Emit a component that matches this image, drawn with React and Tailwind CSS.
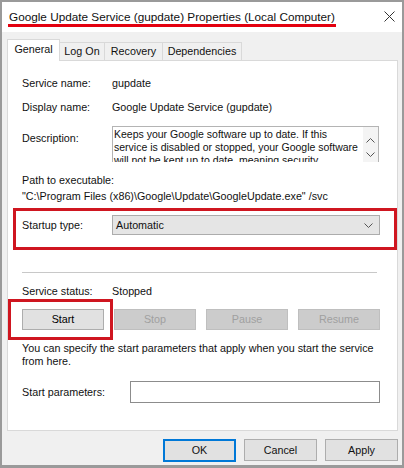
const font = { fontFamily: '"Liberation Sans", Arial, sans-serif' };

const Chevron = ({ up = false, className = "" }) => (
    <svg width="9" height="5" viewBox="0 0 9 5" className={className}>
        <polyline
            points={up ? "0.5,4.5 4.5,0.5 8.5,4.5" : "0.5,0.5 4.5,4.5 8.5,0.5"}
            fill="none"
            stroke="#555"
            strokeWidth="1"
        />
    </svg>
);

const Btn = ({ label, disabled = false }) => (
    <div
        className={`h-[21px] flex items-center justify-center border ${
            disabled
                ? "bg-[#cccccc] border-[#bfbfbf] text-[#a0a0a0]"
                : "bg-[#e1e1e1] border-[#adadad] text-black"
        }`}
    >
        {label}
    </div>
);

const App = () => {
    return (
        <div
            style={font}
            className="w-[404px] h-[468px] bg-[#f0f0f0] border-t-2 border-l-2 border-r-2 border-b-[3px] border-[#9a9a9a] text-[10.75px] text-[#111] flex flex-col"
        >
            {/* title bar */}
            <div className="h-[30px] bg-white flex items-center pl-[6px] shrink-0">
                <span className="px-px leading-[14px] text-[11.75px] border-b-[3px] border-[#e3000f] mt-[2px]">
                    Google Update Service (gupdate) Properties (Local Computer)
                </span>
                <svg width="11" height="11" viewBox="0 0 11 11" className="ml-auto mr-[7px] -mt-[1px]">
                    <path d="M0.5 0.5 L10.5 10.5 M10.5 0.5 L0.5 10.5" stroke="#333" strokeWidth="1" />
                </svg>
            </div>

            <div className="pl-[5px] pr-[4px] pt-[7px] flex flex-col">
                {/* tabs */}
                <div className="h-[21px] flex items-end">
                    <div className="relative z-10 -mb-px h-[22px] w-[53px] bg-white border border-b-0 border-[#d9d9d9] flex items-center justify-center pb-[2px]">
                        General
                    </div>
                    <div className="h-[18px] w-[45px] border border-l-0 border-b-0 border-[#d9d9d9] flex items-center justify-center">
                        Log On
                    </div>
                    <div className="h-[18px] w-[58px] border border-l-0 border-b-0 border-[#d9d9d9] flex items-center justify-center">
                        Recovery
                    </div>
                    <div className="h-[18px] w-[79px] border border-l-0 border-b-0 border-[#d9d9d9] flex items-center justify-center">
                        Dependencies
                    </div>
                </div>

                {/* panel */}
                <div className="h-[371px] border border-[#d9d9d9] bg-white pl-[14px] pr-[17px] pt-[14px] flex flex-col">
                    <div className="h-4 flex items-center">
                        <span className="w-[90px]">Service name:</span>
                        <span>gupdate</span>
                    </div>
                    <div className="mt-[8px] h-4 flex items-center">
                        <span className="w-[90px]">Display name:</span>
                        <span>Google Update Service (gupdate)</span>
                    </div>
                    <div className="mt-[11px] flex">
                        <span className="w-[90px] pt-[4px] leading-4">Description:</span>
                        <div className="flex-1 mr-px h-[36px] border border-b-0 border-[#b4b4b4] flex overflow-hidden">
                            <div className="flex-1 pl-px pt-px text-[10.5px] leading-[13px] whitespace-nowrap overflow-hidden">
                                <div>Keeps your Google software up to date. If this</div>
                                <div>service is disabled or stopped, your Google software</div>
                                <div>will not be kept up to date, meaning security</div>
                            </div>
                            <div className="w-[15px] flex flex-col items-center gap-[9px] pt-[11px] bg-[#f4f4f4]">
                                <Chevron up />
                                <Chevron />
                            </div>
                        </div>
                    </div>
                    <div className="mt-[10px] h-4 leading-4">Path to executable:</div>
                    <div className="h-4 leading-4 whitespace-nowrap">
                        "C:\Program Files (x86)\Google\Update\GoogleUpdate.exe" /svc
                    </div>

                    {/* startup type */}
                    <div className="mt-[4px] -ml-[9px] -mr-[17px] h-[42px] border-[3px] border-[#cf1620] pl-[6px] pr-[14px] pt-[4px]">
                        <div className="h-[20px] flex items-center">
                            <span className="w-[90px]">Startup type:</span>
                            <div className="flex-1 h-[20px] bg-[#e5e5e5] border border-[#acacac] flex items-center pl-[3px] pr-[6px]">
                                <span>Automatic</span>
                                <Chevron className="ml-auto" />
                            </div>
                        </div>
                    </div>

                    <div className="mt-[22px] mr-[3px] h-px bg-[#c8c8c8]" />

                    <div className="mt-[10px] h-4 flex items-center">
                        <span className="w-[90px]">Service status:</span>
                        <span>Stopped</span>
                    </div>

                    <div className="mt-[10px] grid grid-cols-4 gap-[10px]">
                        <div className="relative">
                            <Btn label="Start" />
                            <div className="absolute -left-[14px] -right-[9px] -top-[10px] -bottom-[10px] border-[3px] border-[#cf1620]" />
                        </div>
                        <Btn label="Stop" disabled />
                        <Btn label="Pause" disabled />
                        <Btn label="Resume" disabled />
                    </div>

                    <div className="mt-[12px] leading-[13px] whitespace-nowrap">
                        <div>You can specify the start parameters that apply when you start the service</div>
                        <div>from here.</div>
                    </div>

                    <div className="mt-[13px] h-[22px] flex items-center">
                        <span className="w-[108px]">Start parameters:</span>
                        <div className="flex-1 h-[22px] border border-[#8c8c8c] bg-white" />
                    </div>
                </div>

                {/* footer */}
                <div className="mt-[8px] flex justify-end gap-[8px]">
                    <div className="w-[73px] h-[23px] bg-[#e1e1e1] border-2 border-[#0078d7] flex items-center justify-center">
                        OK
                    </div>
                    <div className="w-[73px] h-[22px] bg-[#e1e1e1] border border-[#adadad] flex items-center justify-center">
                        Cancel
                    </div>
                    <div className="w-[73px] h-[22px] bg-[#e1e1e1] border border-[#adadad] flex items-center justify-center">
                        Apply
                    </div>
                </div>
            </div>
        </div>
    );
};

export default App;
